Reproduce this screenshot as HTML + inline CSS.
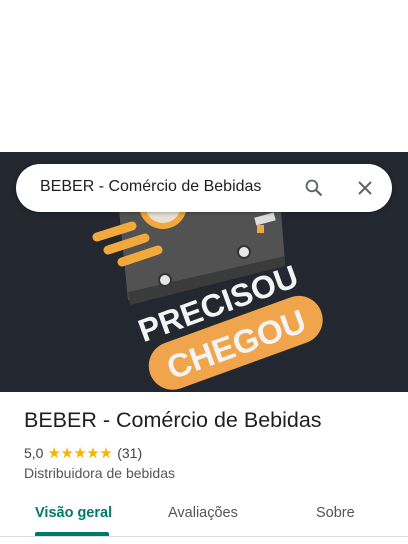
<!DOCTYPE html>
<html><head><meta charset="utf-8"><style>
body{margin:0;width:408px;height:544px;background:#fff;font-family:"Liberation Sans",Arial,sans-serif;position:relative;overflow:hidden}
.hero{position:absolute;left:0;top:152px;width:408px;height:240px;background:#23272f}
.search{position:absolute;left:16px;top:164px;width:376px;height:48px;background:#fff;border-radius:24px;box-shadow:0 1px 4px rgba(0,0,0,.3)}
.search span{position:absolute;left:24px;top:14px;font-size:16px;color:#202124}
h1{position:absolute;left:24px;top:408px;margin:0;font-weight:normal;font-size:21.5px;color:#1f1f1f}
.r{position:absolute;left:24px;top:444px;font-size:14px;color:#444}
.st{color:#f9b400;letter-spacing:-0.5px;margin:0 5px 0 4px;font-size:15px}
.c{position:absolute;left:24px;top:465px;font-size:14px;color:#555}
.tab{position:absolute;top:505px;font-size:14.5px;color:#555}
</style></head><body>
<div class="hero">
<svg width="408" height="240" viewBox="0 152 408 240">
<polygon points="118,200 280,200 285,262 128,300" fill="#525252"/>
<polygon points="128,292 285,256 285,266 130,305" fill="#3b3b3b"/>
<circle cx="163" cy="205" r="24" fill="#f2a93b"/>
<circle cx="163" cy="205" r="18" fill="#e8e0d2"/>
<rect x="255" y="215" width="20" height="8" fill="#ddd" transform="rotate(-15 265 219)"/>
<rect x="257" y="225" width="7" height="8" fill="#f2a93b"/>
<g stroke="#f2a93b" stroke-width="9" stroke-linecap="round">
<line x1="97" y1="237" x2="132" y2="226"/>
<line x1="108" y1="250" x2="145" y2="238"/>
<line x1="122" y1="262" x2="158" y2="250"/>
</g>
<circle cx="244" cy="252" r="6" fill="#e6e6e6" stroke="#333" stroke-width="2"/>
<circle cx="165" cy="280" r="6" fill="#e6e6e6" stroke="#333" stroke-width="2"/>
<g transform="rotate(-20 230 330)">
<rect x="140" y="320" width="182" height="48" rx="24" fill="#f0a44c"/>
<text x="228" y="312" text-anchor="middle" font-family="Liberation Sans" font-weight="bold" font-size="32" fill="#f4f4f4">PRECISOU</text>
<text x="231" y="357" text-anchor="middle" font-family="Liberation Sans" font-weight="bold" font-size="33" fill="#f4f4f4">CHEGOU</text>
</g>
</svg>
</div>
<div class="search"><span>BEBER - Comércio de Bebidas</span>
<svg style="position:absolute;left:288px;top:14px" width="20" height="20" viewBox="0 0 24 24"><circle cx="9.5" cy="9.5" r="6.5" fill="none" stroke="#5f6368" stroke-width="2.2"/><line x1="14.5" y1="14.5" x2="21" y2="21" stroke="#5f6368" stroke-width="2.6"/></svg>
<svg style="position:absolute;left:340px;top:15px" width="18" height="18" viewBox="0 0 18 18"><path d="M3 3L15 15M15 3L3 15" stroke="#5f6368" stroke-width="2"/></svg>
</div>
<h1>BEBER - Comércio de Bebidas</h1>
<div class="r">5,0<span class="st">★★★★★</span>(31)</div>
<div class="c">Distribuidora de bebidas</div>
<div class="tab" style="left:35px;color:#00796b;font-weight:bold">Visão geral</div>
<div style="position:absolute;left:35px;top:532px;width:74px;height:4px;background:#00796b;border-radius:2px 2px 0 0"></div>
<div class="tab" style="left:168px">Avaliações</div>
<div class="tab" style="left:316px">Sobre</div>
<div style="position:absolute;left:0;top:536px;width:408px;height:1px;background:#ddd"></div>
</body></html>
